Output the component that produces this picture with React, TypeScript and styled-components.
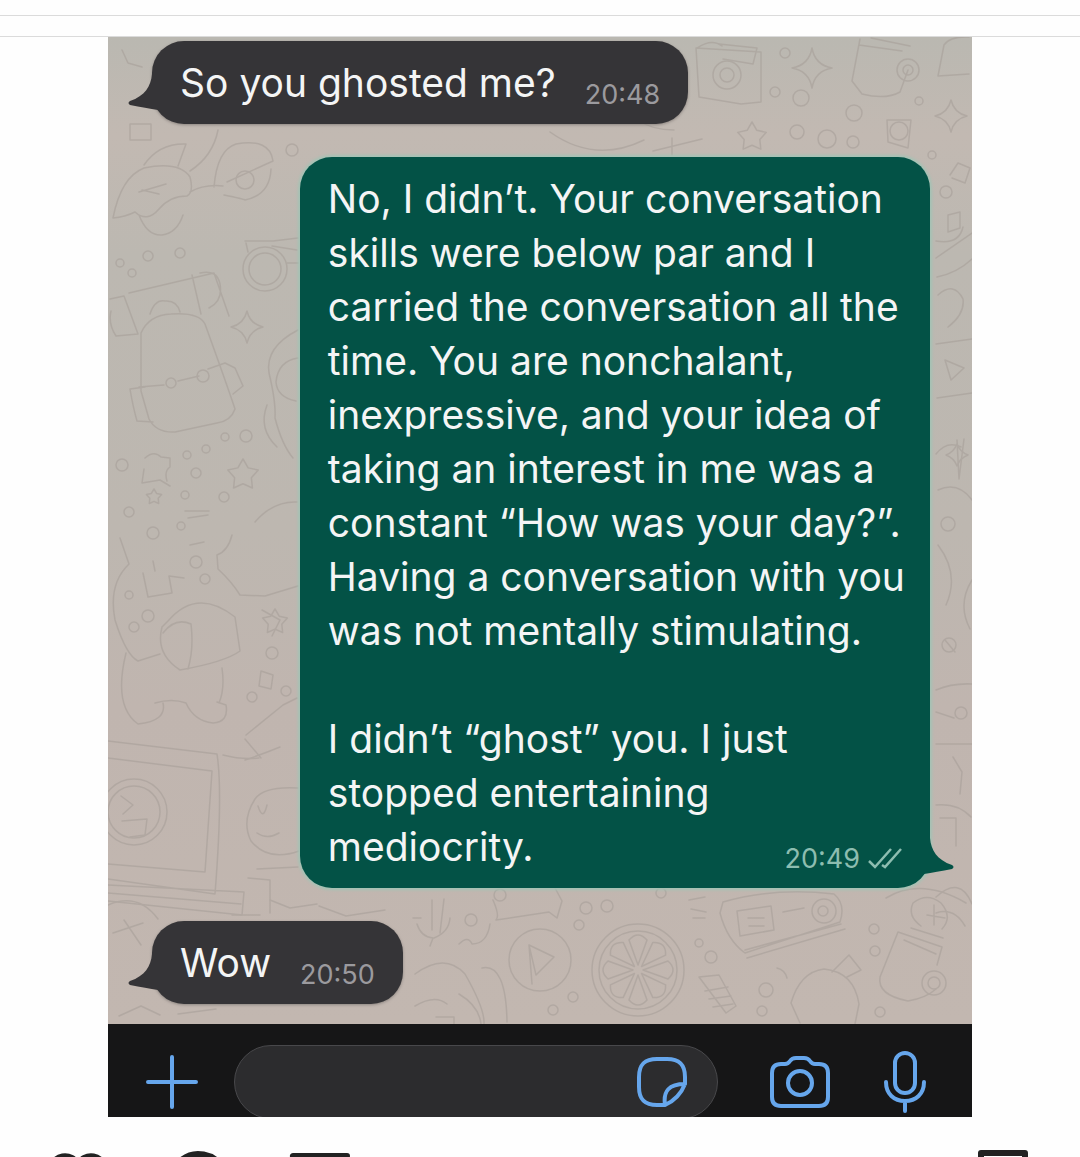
import React from "react";
import styled, { createGlobalStyle, css } from "styled-components";

const GlobalStyle = createGlobalStyle`
  *, *::before, *::after { box-sizing: border-box; }
  body { margin: 0; background: #fefefe; }
`;

const Page = styled.div`
  height: 100vh;
  overflow: hidden;
  font-family: Inter, "Liberation Sans", sans-serif;
`;

const TopStrip = styled.div`
  height: 37px;
  padding-top: 15px;
  border-bottom: 1px solid #dbdbdb;
`;

const Divider = styled.hr`
  margin: 0;
  border: 0;
  border-top: 1px solid #dbdbdb;
`;

const Photo = styled.article`
  width: 80%;
  margin: 0 auto;
`;

const Chat = styled.section`
  position: relative;
  isolation: isolate;
  display: flex;
  flex-direction: column;
  gap: 33px;
  padding: 4px 42px 20px 44px;
  overflow: hidden;
  background: linear-gradient(180deg, #bab8b1 0%, #c2b9b2 10%, #bcb8b1 22%, #bdb7b0 50%, #c0b5af 68%, #c2b7b0 100%);
`;

const Wallpaper = styled.svg`
  position: absolute;
  inset: 0;
  z-index: -1;
  width: 100%;
  height: 100%;
  fill: none;
  stroke: #a59d97;
  stroke-width: 1.5;
  stroke-linecap: round;
  stroke-linejoin: round;
  opacity: 0.54;
`;

const Bubble = styled.div<{ $sent?: boolean }>`
  position: relative;
  border-radius: 32px;
  color: #f4f5f5;
  font-size: 39px;
  line-height: 54px;
  ${({ $sent }) =>
    $sent
      ? css`
          align-self: flex-end;
          width: 81%;
          padding: 15px 24px 14px 28px;
          background: #035246;
          box-shadow: 0 0 3px 2px #a3c3b5;
        `
      : css`
          display: flex;
          align-items: flex-end;
          gap: 29px;
          align-self: flex-start;
          padding: 15px 28px 14px;
          background: #353437;
          box-shadow: 0 1px 3px #8c8580;
        `}
`;

const Tail = styled.svg<{ $sent?: boolean }>`
  position: absolute;
  bottom: 10px;
  width: 36px;
  height: 40px;
  ${({ $sent }) =>
    $sent
      ? css`
          right: -24px;
          fill: #035246;
          transform: scaleX(-1);
        `
      : css`
          left: -24px;
          fill: #353437;
        `}
`;

const Message = styled.p`
  margin: 0;
  & + & { margin-top: 54px; }
`;

const Stamp = styled.span<{ $sent?: boolean }>`
  display: flex;
  align-items: center;
  gap: 8px;
  font-size: 27px;
  line-height: 30px;
  color: ${({ $sent }) => ($sent ? "#8dbdb0" : "#9b9a9e")};
  ${({ $sent }) => $sent && css`float: right; margin: 24px 4px 0 0;`}
`;

const Ticks = styled.svg`
  width: 34px;
  height: 24px;
  fill: none;
  stroke: currentColor;
  stroke-width: 2.5;
`;

const Composer = styled.form`
  display: flex;
  height: 93px;
  padding: 21px 46px 0 38px;
  overflow: hidden;
  background: #161617;
`;

const Field = styled.div`
  display: flex;
  flex: 1;
  min-width: 0;
  align-items: center;
  height: 74px;
  margin: 0 52px 0 36px;
  padding: 0 30px 0 36px;
  border: 1px solid #48484b;
  border-radius: 37px;
  background: #2c2c2e;
`;

const TextBox = styled.input`
  flex: 1;
  min-width: 0;
  border: 0;
  outline: 0;
  background: transparent;
  color: #f4f5f5;
  font: inherit;
  font-size: 32px;
`;

const IconButton = styled.button`
  display: flex;
  flex: none;
  align-items: center;
  height: 74px;
  padding: 0;
  border: 0;
  background: transparent;
  color: #66a6ec;
  & + & { margin-left: 54px; }
  svg {
    fill: none;
    stroke: currentColor;
    stroke-width: 4;
    stroke-linecap: round;
    stroke-linejoin: round;
  }
`;

const Actions = styled.footer`
  display: flex;
  gap: 60px;
  padding: 33px 50px 0;
`;

const Action = styled.button<{ $end?: boolean }>`
  height: 60px;
  padding: 0;
  border: 0;
  background: transparent;
  color: #222;
  ${({ $end }) => $end && css`margin-left: auto;`}
  svg {
    display: block;
    overflow: visible;
    fill: none;
    stroke: currentColor;
    stroke-width: 6;
    stroke-linejoin: round;
  }
`;

const BubbleTail = ({ sent }: { sent?: boolean }) => (
  <Tail $sent={sent} viewBox="0 0 36 40" aria-hidden="true">
    <path d="M24 0C23 12 17 22 2 27Q-1 29 2 31Q18 34 30 36L36 40V0Z" />
  </Tail>
);

const dots: [number, number, number][] = [
  [120, 263, 4], [148, 256, 5], [180, 253, 5], [132, 273, 4], [292, 150, 6],
  [245, 180, 9], [246, 436, 6], [225, 437, 4], [187, 455, 4], [206, 449, 4],
  [196, 473, 5], [185, 495, 4], [224, 497, 5], [122, 465, 6], [129, 512, 5],
  [153, 533, 6], [181, 526, 4], [196, 562, 6], [205, 579, 5], [129, 595, 4],
  [148, 616, 6], [134, 627, 5], [272, 653, 6], [252, 697, 5], [286, 691, 5],
  [785, 53, 5], [801, 98, 8], [854, 113, 8], [797, 132, 7], [853, 142, 6],
  [919, 101, 4], [775, 92, 5], [932, 155, 4], [946, 192, 6], [948, 524, 7],
  [949, 645, 7], [961, 713, 6], [471, 920, 6], [586, 908, 6], [607, 906, 6],
  [579, 925, 5], [661, 893, 5], [573, 997, 5], [553, 1010, 5], [711, 957, 6],
  [766, 990, 7], [762, 1011, 5], [875, 951, 5], [880, 1012, 5], [874, 929, 5],
  [500, 895, 6], [699, 943, 4],
];

const stars: [number, number, number][] = [
  [752, 137, 15], [243, 475, 16], [154, 497, 8], [275, 622, 13],
];

const sparkles: [number, number, number][] = [
  [247, 327, 16], [951, 116, 16], [812, 68, 20], [957, 455, 11],
];

const starPath = (x: number, y: number, r: number) =>
  Array.from({ length: 10 }, (_, i) => {
    const a = (Math.PI * i) / 5 - Math.PI / 2;
    const k = i % 2 ? r * 0.55 : r;
    return `${i ? "L" : "M"}${x + k * Math.cos(a)} ${y + k * Math.sin(a)}`;
  }).join("") + "Z";

const sparklePath = (x: number, y: number, r: number) =>
  `M${x} ${y - r}Q${x + 3} ${y - 3} ${x + r} ${y}Q${x + 3} ${y + 3} ${x} ${y + r}Q${x - 3} ${y + 3} ${x - r} ${y}Q${x - 3} ${y - 3} ${x} ${y - r}Z`;

const Doodles = () => (
  <Wallpaper viewBox="108 37 864 987" preserveAspectRatio="xMidYMin slice" aria-hidden="true">
    {dots.map(([x, y, r]) => <circle key={`${x}-${y}`} cx={x} cy={y} r={r} />)}
    {stars.map(([x, y, r]) => <path key={`${x}-${y}`} d={starPath(x, y, r)} />)}
    {sparkles.map(([x, y, r]) => <path key={`${x}-${y}`} d={sparklePath(x, y, r)} />)}
    {/* shoe, cap and cloud */}
    <path d="M122 50l6 13 14 4M130 124h21v16h-21zM113 218q8-41 31-50 35-7 46 9 4 15-3 19-17 0-28 13-12 14-24 3-10 5-22 6zM139 192l27-8M142 190l17 4M139 215q8 21 23 20 15-2 21-20M144 165q15-22 42-21l-8 22M190 171q23-15 28-41M214 187q3-37 22-43 34-6 37 17l-46 21M224 195q20 4 21 5 25-5 26-31M190 192q14-8 33-6" />
    <path d="M245 241h28l25-3M246 243l2 9M272 246l25 4M287 263h12" />
    <circle cx="265" cy="269" r="22" /><circle cx="265" cy="269" r="16" />
    {/* ticket and backpack */}
    <path d="M129 293l85-20 15 43M110 299l14-3 14 38-22 2q-8-12-5-25M192 275l9 39M200 273q17-4 20 11 3 17-11 24M150 314q5-15 15-13 12-1 15 11" />
    <path d="M141 391v-58q8-18 30-19 28-2 34 10l14 39q11 31 16 46-4 12-18 14l-42 9q-19 1-26-13zM139 387l25-2M178 381l21-5M208 369l17-6 10 5 8 18-10 8M145 387l-15 2q3 18 7 32l16 1" />
    <circle cx="171" cy="383" r="5" /><circle cx="203" cy="376" r="6" />
    {/* flask */}
    <path d="M298 330q-33 17-29 43 7 29 6 45 7 27 18 40M298 358q-20 3-22 24 1 15 20 19M267 405q-9 24 10 42" />
    {/* bunny and flag */}
    <path d="M145 458q9-8 16-1l9 1v9q-6 4-3 14M144 469l-2 14 18-3 10 6M185 511h24M188 518l20-3M255 522q18-21 42-20M190 545l14-3" />
    <path d="M120 538l9 26q-21 20-14 56 11 35 23 41l22-7M143 573l5 24 24-4-3-17 15 2M155 571l-2-10M232 535q-4 16-15 20l1 14q14 13 22 26l25 1 33-10" />
    {/* elephant */}
    <path d="M168 621q29-34 67-4l5 34q-15 11-60 19-25-16-18-43zM163 633q12-16 28-9 3 25-3 45M222 668q3 21-3 35M155 703q17-5 31 0 8 18 27 20 16-1 13-18l-9-3M126 653q-13 53 12 71 29-3 25-21M262 610l18 10-8 16M246 735l37-30 14-7M245 739l16 19M245 760q18-6 35-13M261 671l12 4-2 14-12-3z" />
    {/* framed badge */}
    <path d="M108 741l109 13q6 39-2 140l-107-15M108 758l104 13-7 101-97-8M108 885l136 7-2 23-134-14M108 893l133 11M223 755q19 5 36 3M257 869l41-2M248 878l22 2v33" />
    <circle cx="134" cy="812" r="33" /><circle cx="134" cy="812" r="26" />
    <path d="M121 796l12 9-10 9M122 821l25-2-2 16-15 2M298 788q-34-2-43 11-14 22-4 42 17 21 48 10M258 806q5 16 9-1M257 833q10 7 22 0" />
    {/* polaroid and handset */}
    <path d="M696 48l65 4v50l-20 2-42-7zM697 48q15-10 25-2M719 44l38 4-4 16-30-5" />
    <circle cx="727" cy="75" r="14" /><circle cx="727" cy="75" r="7" />
    <path d="M860 39l-8 42 10 13q24 6 38-2l8-22M859 45l43 6M871 38l39 8" />
    <circle cx="908" cy="70" r="11" /><circle cx="908" cy="70" r="5" />
    <path d="M944 45l-6 31 31-2M969 37q-19-1-25 8M550 132q45 32 94 8M638 120q14 10 36 10M653 151l49-12M672 138v17" />
    <path d="M887 120h24l-3 28-20-6z" /><circle cx="899" cy="131" r="9" />
    <circle cx="827" cy="139" r="9" />
    {/* right margin */}
    <path d="M950 175l8-12 12 5-5 15-13-5M948 215l12-3v16l-12 4zM936 241q23 4 27-14M936 258l36-25M937 277q20-4 35-18M938 295q16-14 25 4 2 15-15 28M936 344l36-5M945 360l19 8-13 12zM937 398l35-5M936 454q11-14 25-7M957 440l2 39 5-40M938 490q20-9 34 10M938 545q22 29 8 60M972 580q-15 24-2 49M945 640l10 12M936 690q16-7 36-6M936 712l18 6M936 744h36M953 757l9 15-2 22M936 805q22-2 35 12M940 818h16v28M936 897q24-22 36 7M936 913q18-6 29 13" />
    {/* cactus, bone and play disc */}
    <path d="M432 900v30M444 899l-4 34M417 924q4 13 16 14l-3 8M450 918q-1 14-16 20M413 918h8M493 900q7 16 3 20l53-8 8 6 5-17-8-15M459 944q9-9 13 0 15 0 18-20M415 974q30-22 50 0 20 35 19 50M482 968q24-5 25 54M415 1006q20-12 32-2M459 994q20 12 22 30M436 1017h18v7" />
    <circle cx="540" cy="960" r="31" /><path d="M529 945l25 12-18 18zM529 945l3 39" />
    {/* citrus slice */}
    <circle cx="638" cy="970" r="46" /><circle cx="638" cy="970" r="39" />
    {[0, 45, 90, 135, 180, 225, 270, 315].map((a) => (
      <path key={a} transform={`rotate(${a} 638 970)`} d="M638 965l-9-25q9-10 18 0z" />
    ))}
    {/* cassette, beanie and mitten */}
    <path d="M723 902q52-15 111-8 12 10 6 28l-95 31q-18-13-25-40zM737 911l34-5 3 24-34 6zM783 912l21-4M745 950l96-26M747 958l98-29M689 900l16-3M691 909l15 3M693 918h12M748 918h16M749 926h15" />
    <circle cx="824" cy="911" r="12" /><circle cx="823" cy="911" r="5" />
    <path d="M699 977l20-2 17 31-10 7zM705 991l23-4M709 999l22-3M713 1007l20-3" />
    <path d="M800 1023l-9-20q9-31 33-34 30 3 35 35l-4 20M832 972l17-17 12 15-14 7M777 968q8 2 10 10" />
    <path d="M898 932l44 15-5 18M898 932l-18 45q-3 18 28 24 18-3 28-12M904 940l32 14M911 928l32 10M921 926q-14-10-8-23 14-11 28 0 12 14 1 26M886 898q35-21 80 5M927 915l18 3M934 905v20" />
    <circle cx="934" cy="983" r="12" /><circle cx="934" cy="983" r="6" />
    <path d="M108 905q30-13 50 14M113 933l30-10M124 920l17 25M119 1016l22-10 19 9M178 1014l38-5M270 900l20 8 27-4M319 906l27 10 39-6M232 915h28" />
  </Wallpaper>
);

export default function App() {
  return (
    <Page>
      <GlobalStyle />
      <TopStrip><Divider /></TopStrip>
      <Photo>
        <Chat aria-label="Conversation">
          <Doodles />
          <Bubble>
            <BubbleTail />
            <Message>So you ghosted me?</Message>
            <Stamp>20:48</Stamp>
          </Bubble>
          <Bubble $sent>
            <BubbleTail sent />
            <Message>
              No, I didn’t. Your conversation skills were below par and I
              carried the conversation all the time. You are nonchalant,
              inexpressive, and your idea of taking an interest in me was a
              constant “How was your day?”. Having a conversation with you
              was not mentally stimulating.
            </Message>
            <Message>
              I didn’t “ghost” you. I just stopped entertaining mediocrity.
              <Stamp $sent>
                20:49
                <Ticks viewBox="0 0 34 24" aria-label="Delivered">
                  <path d="M1 14l6 6L23 2M14 18l3 2L33 2" />
                </Ticks>
              </Stamp>
            </Message>
          </Bubble>
          <Bubble>
            <BubbleTail />
            <Message>Wow</Message>
            <Stamp>20:50</Stamp>
          </Bubble>
        </Chat>
        <Composer onSubmit={(e) => e.preventDefault()}>
          <IconButton type="button" aria-label="Attach">
            <svg width="52" height="54" viewBox="0 0 52 54"><path d="M26 2v50M2 27h48" /></svg>
          </IconButton>
          <Field>
            <TextBox type="text" aria-label="Message" />
            <IconButton type="button" aria-label="Stickers">
              <svg width="50" height="50" viewBox="0 0 50 50">
                <path d="M28 48H20C7 48 2 42 2 30V20C2 7 8 2 20 2H30C43 2 48 8 48 20V27C44 37 37 44 28 48ZM28 48C26 34 32 27 48 27" />
              </svg>
            </IconButton>
          </Field>
          <IconButton type="button" aria-label="Camera">
            <svg width="60" height="52" viewBox="0 0 60 52">
              <path d="M11 8h4q3 0 5-3 2-3 6-3h8q4 0 6 3 2 3 5 3h4q9 0 9 9v24q0 9-9 9H11q-9 0-9-9V17q0-9 9-9Z" />
              <circle cx="30" cy="27" r="12" />
            </svg>
          </IconButton>
          <IconButton type="button" aria-label="Voice message">
            <svg width="42" height="62" viewBox="0 0 42 62">
              <rect x="11" y="2" width="20" height="40" rx="10" />
              <path d="M2 31C2 43 10 50 21 50S40 43 40 31M21 50v10" />
            </svg>
          </IconButton>
        </Composer>
      </Photo>
      <Actions>
        <Action type="button" aria-label="Like">
          <svg width="60" height="60" viewBox="0 0 60 60"><path d="M28 15A14 14 0 0 0 1 20c0 14 14 22 27 33 13-11 27-19 27-33A14 14 0 0 0 28 15Z" /></svg>
        </Action>
        <Action type="button" aria-label="Comment">
          <svg width="60" height="60" viewBox="0 0 60 60"><path d="M52 46A27.5 27.5 0 1 0 43 55l13 3Z" /></svg>
        </Action>
        <Action type="button" aria-label="Share">
          <svg width="60" height="60" viewBox="0 0 60 60"><path d="M3 6h54L30 54 23 27ZM23 27 57 6" /></svg>
        </Action>
        <Action type="button" aria-label="Save" $end>
          <svg width="60" height="60" viewBox="0 0 60 60"><path d="M11 3h44v54L33 36 11 57Z" /></svg>
        </Action>
      </Actions>
    </Page>
  );
}
